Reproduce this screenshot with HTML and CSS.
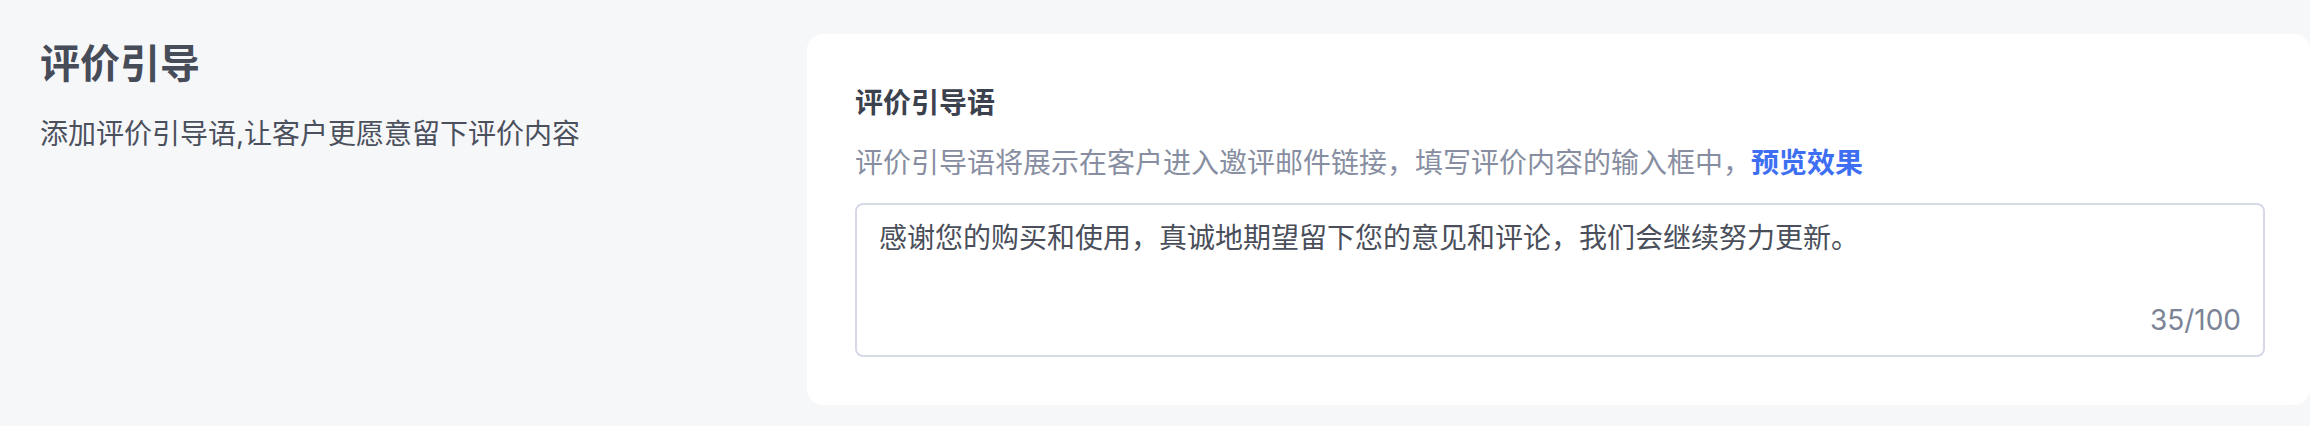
FILE: index.html
```html
<!DOCTYPE html>
<html lang="zh-CN">
<head>
<meta charset="utf-8">
<title>评价引导</title>
<link rel="stylesheet" href="styles.css">
</head>
<body>
<div class="page">
  <section class="intro">
    <h1 class="intro-title">评价引导</h1>
    <p class="intro-desc">添加评价引导语,让客户更愿意留下评价内容</p>
  </section>
  <section class="card">
    <h2 class="field-label">评价引导语</h2>
    <p class="field-hint">评价引导语将展示在客户进入邀评邮件链接，填写评价内容的输入框中，<a class="preview-link" href="#">预览效果</a></p>
    <div class="textbox">
      <div class="textbox-text">感谢您的购买和使用，真诚地期望留下您的意见和评论，我们会继续努力更新。</div>
      <div class="textbox-count">35/100</div>
    </div>
  </section>
</div>
</body>
</html>
```

FILE: styles.css
```css
html, body {
  margin: 0;
  padding: 0;
  background: #f6f7f9;
}

body {
  font-family: Inter, "Noto Sans CJK SC", sans-serif;
  width: 2310px;
  height: 426px;
  overflow: hidden;
}

.page {
  display: grid;
  grid-template-columns: 767px 1fr;
  padding: 34px 0 21px 40px;
  box-sizing: border-box;
  height: 426px;
}

.intro {
  padding-top: 2px;
}

.intro-title {
  margin: 0;
  font-size: 40px;
  line-height: 56px;
  font-weight: 700;
  color: #474c59;
}

.intro-desc {
  margin: 20px 0 0;
  font-size: 28px;
  line-height: 44px;
  color: #4b505d;
}

.card {
  background: #ffffff;
  border-radius: 16px;
  padding: 47px 45px 48px 48px;
  display: flex;
  flex-direction: column;
}

.field-label {
  margin: 0;
  font-size: 28px;
  line-height: 44px;
  font-weight: 600;
  color: #3c414e;
}

.field-hint {
  margin: 16px 0 0;
  font-size: 28px;
  line-height: 44px;
  color: #878ea1;
}

.preview-link {
  color: #3e6ff3;
  font-weight: 600;
  text-decoration: none;
}

.textbox {
  margin-top: 18px;
  height: 154px;
  box-sizing: border-box;
  border: 2px solid #d6dae5;
  border-radius: 8px;
  padding: 11px 22px 13px 22px;
  display: flex;
  flex-direction: column;
}

.textbox-text {
  font-size: 28px;
  line-height: 44px;
  color: #4a4f5b;
}

.textbox-count {
  margin-top: auto;
  align-self: flex-end;
  font-size: 28px;
  line-height: 44px;
  color: #7b8396;
}
```
